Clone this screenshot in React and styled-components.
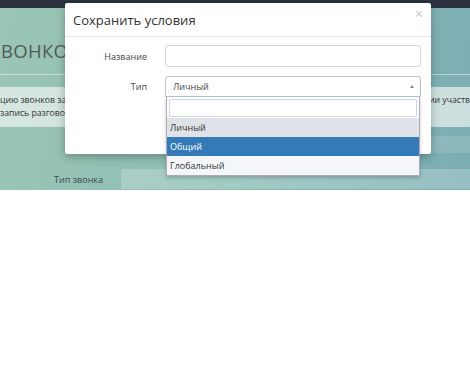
import React from 'react'
import styled, { createGlobalStyle } from 'styled-components'

const GlobalStyle = createGlobalStyle`
  body {
    margin: 0;
    background: #fff;
    font-family: "Open Sans", "Liberation Sans", sans-serif;
  }
`

const Stage = styled.div`
  position: relative;
  height: 190px;
  overflow: hidden;
  background: linear-gradient(100deg, #9bc6b5 0%, #8dbdb4 45%, #7badb4 100%);
`

const TopBar = styled.div`
  height: 8px;
  background: #2c333e;
`

const PageTitle = styled.h1`
  margin: 31px 0 0;
  padding: 0 0 11px 1px;
  font-size: 18.5px;
  font-weight: 400;
  letter-spacing: 0.3px;
  color: #4f5b59;
  border-bottom: 1px solid rgba(255, 255, 255, 0.45);
  line-height: 24px;
  white-space: nowrap;
`

const Alert = styled.div`
  margin-top: 12px;
  height: 40px;
  padding: 7px 0 0;
  box-sizing: border-box;
  background: rgba(235, 242, 240, 0.72);
  font-size: 8.7px;
  line-height: 13px;
  color: #333;
`

const AlertLine = styled.div`
  display: flex;
  justify-content: space-between;
  white-space: nowrap;
`

const Link = styled.span`
  color: #d7893b;
`

const FormRow = styled.div`
  display: flex;
  align-items: center;
  height: ${p => p.$h}px;
  margin-top: ${p => p.$mt}px;
`

const RowLabel = styled.div`
  width: 103px;
  text-align: right;
  padding-right: 18px;
  font-size: 9px;
  color: #3a4c52;
`

const GhostInput = styled.div`
  flex: 1;
  height: 100%;
  box-sizing: border-box;
  padding-left: 7px;
  display: flex;
  align-items: center;
  font-size: 9px;
  color: #b6c9c4;
  background: rgba(255, 255, 255, ${p => p.$alpha});
  border-radius: 2px 0 0 2px;
`

const Modal = styled.div`
  position: absolute;
  left: 65px;
  top: 3px;
  width: 366px;
  height: 151px;
  background: #fff;
  border-radius: 2px;
  box-shadow: 0 3px 10px rgba(0, 0, 0, 0.28);
`

const ModalHeader = styled.div`
  height: 33px;
  display: flex;
  align-items: center;
  justify-content: space-between;
  padding: 0 8px 0 8px;
  border-bottom: 1px solid #e8ebee;
`

const ModalTitle = styled.div`
  font-size: 13px;
  color: #333;
`

const Close = styled.div`
  font-size: 14px;
  line-height: 14px;
  color: #c9c9c9;
  margin-top: -12px;
`

const ModalBody = styled.div`
  padding: 8px 10px 0 0;
  display: flex;
  flex-direction: column;
  gap: 9px;
`

const Field = styled.div`
  display: flex;
  align-items: center;
`

const Label = styled.div`
  width: 82px;
  padding-right: 18px;
  text-align: right;
  font-size: 9px;
  color: #444;
`

const Control = styled.div`
  position: relative;
  flex: 1;
`

const TextInput = styled.div`
  height: 22px;
  box-sizing: border-box;
  border: 1px solid #d3d9e3;
  border-radius: 3px;
`

const Select = styled.div`
  height: 21px;
  box-sizing: border-box;
  border: 1px solid #b5c1d8;
  border-radius: 3px 3px 0 0;
  display: flex;
  align-items: center;
  justify-content: space-between;
  padding: 0 6px 0 7px;
  font-size: 9px;
  color: #444;
`

const Caret = styled.span`
  width: 0;
  height: 0;
  border-left: 2.5px solid transparent;
  border-right: 2.5px solid transparent;
  border-bottom: 3px solid #888;
`

const Dropdown = styled.div`
  position: absolute;
  left: 1px;
  right: 1px;
  top: 21px;
  background: #fff;
  border: 1px solid #a9adba;
  border-top: none;
  box-shadow: 0 2px 4px rgba(0, 0, 0, 0.2);
  z-index: 2;
`

const Search = styled.div`
  margin: 2px 2px 1px;
  height: 18px;
  box-sizing: border-box;
  border: 1px solid #cfd6df;
  border-radius: 2px;
`

const Option = styled.div`
  height: 19px;
  display: flex;
  align-items: center;
  padding-left: 3px;
  font-size: 9px;
  color: ${p => (p.$active ? '#fff' : '#333')};
  background: ${p => (p.$active ? '#337ab7' : p.$hover ? '#dfe3e8' : '#f4f6f8')};
`

export default function App() {
  return (
    <>
      <GlobalStyle />
      <Stage>
        <TopBar />
        <PageTitle>ВОНКОВ</PageTitle>
        <Alert>
          <AlertLine>
            <span>
              цию звонков за <Link>период</Link>
            </span>
            <span>ии участв</span>
          </AlertLine>
          <AlertLine>
            <span>запись разговора</span>
            <span></span>
          </AlertLine>
        </Alert>
        <FormRow $h={17} $mt={9}>
          <RowLabel />
          <GhostInput $alpha={0.12} />
        </FormRow>
        <FormRow $h={20} $mt={16}>
          <RowLabel>Тип звонка</RowLabel>
          <GhostInput $alpha={0.22}>Все</GhostInput>
        </FormRow>

        <Modal>
          <ModalHeader>
            <ModalTitle>Сохранить условия</ModalTitle>
            <Close>×</Close>
          </ModalHeader>
          <ModalBody>
            <Field>
              <Label>Название</Label>
              <Control>
                <TextInput />
              </Control>
            </Field>
            <Field>
              <Label>Тип</Label>
              <Control>
                <Select>
                  <span>Личный</span>
                  <Caret />
                </Select>
                <Dropdown>
                  <Search />
                  <Option $hover>Личный</Option>
                  <Option $active>Общий</Option>
                  <Option>Глобальный</Option>
                </Dropdown>
              </Control>
            </Field>
          </ModalBody>
        </Modal>
      </Stage>
    </>
  )
}
